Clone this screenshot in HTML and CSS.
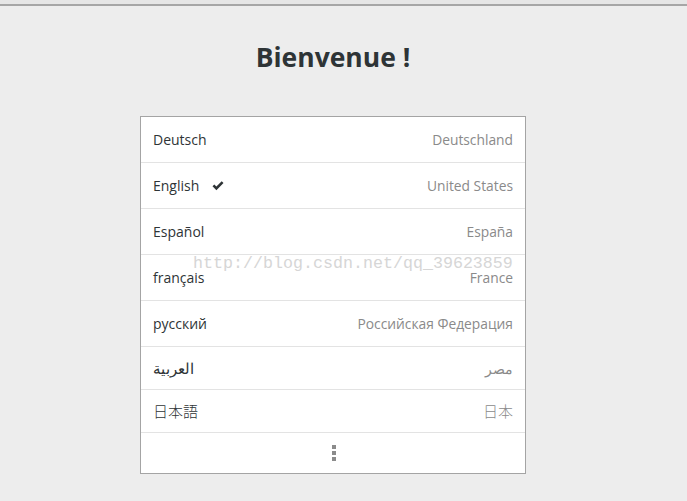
FILE: index.html
```html
<!DOCTYPE html>
<html>
<head>
<meta charset="utf-8">
<title>Bienvenue</title>
<link rel="stylesheet" href="styles.css">
</head>
<body>
<div class="topbar"></div>
<div class="page">
    <h1 class="title">Bienvenue !</h1>

    <div class="lang-list">
        <div class="row">
            <span class="lang">Deutsch</span>
            <span class="region">Deutschland</span>
        </div>
        <div class="row">
            <span class="lang">English
                <svg class="check" width="12" height="10" viewBox="0 0 12 10"><path d="M0.5 5.2 L2.3 3.4 L4.4 5.5 L9.7 0.3 L11.5 2.1 L4.4 9.2 Z" fill="#2e3436"/></svg>
            </span>
            <span class="region">United States</span>
        </div>
        <div class="row">
            <span class="lang">Español</span>
            <span class="region">España</span>
        </div>
        <div class="row">
            <span class="lang">français</span>
            <span class="region">France</span>
        </div>
        <div class="row">
            <span class="lang">русский</span>
            <span class="region">Российская Федерация</span>
        </div>
        <div class="row row-short">
            <span class="lang" lang="ar">العربية</span>
            <span class="region" lang="ar">مصر</span>
        </div>
        <div class="row row-short">
            <span class="lang" lang="ja">日本語</span>
            <span class="region" lang="ja">日本</span>
        </div>
        <div class="row row-more">
            <span class="dots"><i></i><i></i><i></i></span>
        </div>
    </div>

    <!-- watermark over the list -->
    <div class="watermark">http://blog.csdn.net/qq_39623859</div>
</div>
</body>
</html>
```

FILE: styles.css
```css
/* base */
body {
    margin: 0;
    background: #ededed;
    color: #2e3436;
    font-family: 'Open Sans', 'Noto Sans', 'Noto Sans CJK JP', sans-serif;
}

.topbar {
    height: 4px;
    background: #e6e6e6;
    border-bottom: 2px solid #a6a6a6;
}

.page {
    position: relative;
    width: 666px;
    padding-top: 32px;
}

/* title */
.title {
    margin: 0;
    text-align: center;
    font-size: 26.5px;
    font-weight: 700;
    line-height: 38px;
    color: #2e3436;
}

/* language list */
.lang-list {
    width: 384px;
    margin: 40px auto 0;
    background: #ffffff;
    border: 1px solid #a4a4a4;
}

.row {
    display: flex;
    align-items: center;
    justify-content: space-between;
    height: 45px;
    padding: 0 12px;
    border-bottom: 1px solid #e3e3e3;
    font-size: 14px;
}

.row-short {
    height: 42px;
}

.row-more {
    height: 40px;
    border-bottom: none;
    justify-content: center;
}

.lang {
    display: flex;
    align-items: center;
    color: #2e3436;
}

.lang:lang(ja), .region:lang(ja) {
    font-family: 'Noto Sans CJK JP', sans-serif;
    font-size: 15px;
    line-height: 15px;
    margin-bottom: 2px;
    font-weight: 300;
}

.lang:lang(ar) {
    font-size: 15px;
}

.check {
    margin-left: 13px;
}

.region {
    color: #8a8a8a;
    font-size: 13.8px;
}

.dots {
    display: flex;
    flex-direction: column;
    gap: 2px;
    margin-left: 1px;
}

.dots i {
    display: block;
    width: 4px;
    height: 4px;
    background: #8b8b8b;
}

/* watermark */
.watermark {
    position: absolute;
    left: 193px;
    top: 249px;
    font-family: 'Liberation Mono', monospace;
    font-size: 16.67px;
    line-height: 18px;
    color: #d6d6d6;
    pointer-events: none;
}
```
